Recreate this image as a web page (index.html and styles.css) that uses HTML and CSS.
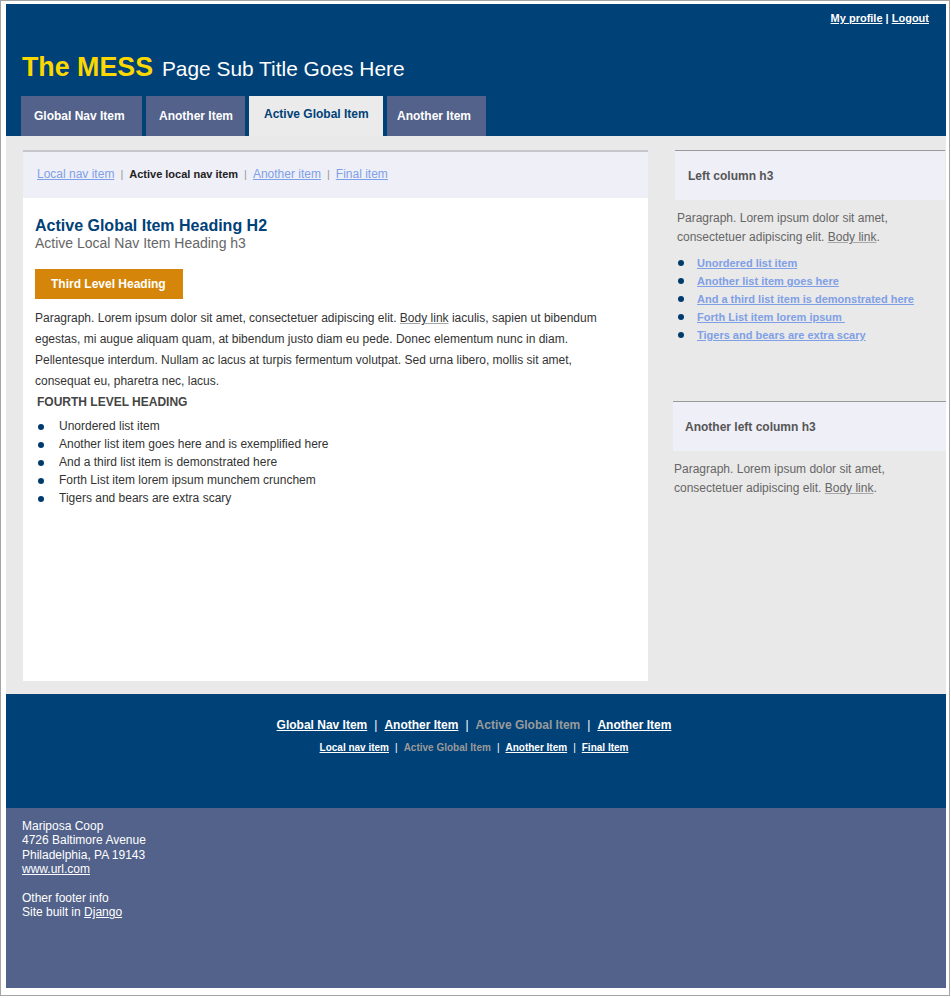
FILE: index.html
```html
<!DOCTYPE html>
<html lang="en">
<head>
<meta charset="utf-8">
<title>The MESS</title>
<link rel="stylesheet" href="styles.css">
</head>
<body>
<div class="frame">
  <div class="page">
    <header class="masthead">
      <div class="toplinks"><a href="#">My profile</a> | <a href="#">Logout</a></div>
      <h1 class="title"><span class="brand">The MESS</span> <span class="subtitle">Page Sub Title Goes Here</span></h1>
      <nav class="gnav">
        <a class="tab tab-1" href="#">Global Nav Item</a>
        <a class="tab tab-2" href="#">Another Item</a>
        <a class="tab tab-active" href="#">Active Global Item</a>
        <a class="tab tab-4" href="#">Another Item</a>
      </nav>
    </header>

    <div class="content">
      <main class="main">
        <div class="lnav">
          <a href="#">Local nav item</a><span class="sep">|</span><span class="lnav-active">Active local nav item</span><span class="sep">|</span><a href="#">Another item</a><span class="sep">|</span><a href="#">Final item</a>
        </div>
        <div class="article">
          <h2 class="h2">Active Global Item Heading H2</h2>
          <h3 class="h3">Active Local Nav Item Heading h3</h3>
          <div class="third">Third Level Heading</div>
          <p class="para">Paragraph. Lorem ipsum dolor sit amet, consectetuer adipiscing elit. <a class="body-link" href="#">Body link</a> iaculis, sapien ut bibendum egestas, mi augue aliquam quam, at bibendum justo diam eu pede. Donec elementum nunc in diam. Pellentesque interdum. Nullam ac lacus at turpis fermentum volutpat. Sed urna libero, mollis sit amet, consequat eu, pharetra nec, lacus.</p>
          <h4 class="h4">FOURTH LEVEL HEADING</h4>
          <ul class="list">
            <li>Unordered list item</li>
            <li>Another list item goes here and is exemplified here</li>
            <li>And a third list item is demonstrated here</li>
            <li>Forth List item lorem ipsum munchem crunchem</li>
            <li>Tigers and bears are extra scary</li>
          </ul>
        </div>
      </main>

      <aside class="side">
        <section class="box box-first">
          <h3 class="box-title">Left column h3</h3>
          <p class="box-para">Paragraph. Lorem ipsum dolor sit amet, consectetuer adipiscing elit. <a class="body-link" href="#">Body link</a>.</p>
          <ul class="side-list">
            <li><a href="#">Unordered list item</a></li>
            <li><a href="#">Another list item goes here</a></li>
            <li><a href="#">And a third list item is demonstrated here</a></li>
            <li><a href="#">Forth List item lorem ipsum&nbsp;</a></li>
            <li><a href="#">Tigers and bears are extra scary</a></li>
          </ul>
        </section>
        <section class="box box-second">
          <h3 class="box-title">Another left column h3</h3>
          <p class="box-para">Paragraph. Lorem ipsum dolor sit amet, consectetuer adipiscing elit. <a class="body-link" href="#">Body link</a>.</p>
        </section>
      </aside>
    </div>

    <footer class="foot">
      <div class="fnav">
        <a href="#">Global Nav Item</a><span class="fsep">|</span><a href="#">Another Item</a><span class="fsep">|</span><span class="f-active">Active Global Item</span><span class="fsep">|</span><a href="#">Another Item</a>
      </div>
      <div class="fnav-sub">
        <a href="#">Local nav item</a><span class="fsep-sub">|</span><span class="f-active">Active Global Item</span><span class="fsep-sub">|</span><a href="#">Another Item</a><span class="fsep-sub">|</span><a href="#">Final Item</a>
      </div>
    </footer>

    <div class="colophon">
      Mariposa Coop<br>
      4726 Baltimore Avenue<br>
      Philadelphia, PA 19143<br>
      <a href="#">www.url.com</a><br>
      <br>
      Other footer info<br>
      Site built in <a href="#">Django</a>
    </div>
  </div>
</div>
</body>
</html>
```

FILE: styles.css
```css
* { box-sizing: content-box; }

body {
  margin: 0;
  background: #ffffff;
  font-family: "Liberation Sans", Arial, Helvetica, sans-serif;
  color: #333333;
}

.frame {
  width: 940px;
  height: 984px;
  border: 1px solid #a4a4a4;
  padding: 3px 3px 7px 5px;
}

.page {
  width: 940px;
  height: 984px;
  display: flex;
  flex-direction: column;
}

/* ---------- masthead ---------- */
.masthead {
  background: #004177;
  height: 132px;
  display: flex;
  flex-direction: column;
}

.toplinks {
  padding-top: 7px;
  padding-right: 17px;
  text-align: right;
  font-size: 11px;
  font-weight: bold;
  line-height: 14px;
  color: #ffffff;
}
.toplinks a { color: #ffffff; }

.title {
  margin: 24px 0 0 16px;
  line-height: 32px;
  height: 32px;
  font-weight: normal;
  white-space: nowrap;
}
.brand {
  color: #fcd800;
  font-size: 26.8px;
  font-weight: bold;
}
.subtitle {
  color: #ffffff;
  font-size: 20.9px;
}

.gnav {
  margin: 15px 0 0 15px;
  display: flex;
  gap: 4px;
  height: 40px;
}
.tab {
  display: block;
  height: 40px;
  line-height: 40px;
  background: #52628a;
  color: #ffffff;
  font-size: 12px;
  font-weight: bold;
  text-decoration: none;
  white-space: nowrap;
}
.tab-1 { width: 108px; padding-left: 13px; }
.tab-2 { width: 86px; padding-left: 13px; }
.tab-4 { width: 89px; padding-left: 10px; line-height: 41px; }
.tab-active {
  width: 119px;
  padding-left: 15px;
  background: #ebebeb;
  color: #004177;
  line-height: 36px;
}

/* ---------- content ---------- */
.content {
  background: #e9e9e9;
  height: 531px;
  padding: 14px 0 13px 17px;
  display: flex;
}

.main {
  width: 625px;
  height: 531px;
  background: #ffffff;
}

.lnav {
  border-top: 2px solid #c6c6cc;
  background: #efeff8;
  height: 46px;
  line-height: 44px;
  padding-left: 14px;
  font-size: 12px;
  color: #888888;
}
.lnav a { color: #7f9fe6; }
.lnav-active { color: #222222; font-weight: bold; font-size: 11px; }
.sep { margin: 0 6px; color: #999999; font-size: 11px; }

.article { padding: 19px 40px 0 12px; }

.h2 {
  margin: 0;
  font-size: 16px;
  line-height: 18px;
  font-weight: bold;
  color: #004177;
}
.h3 {
  margin: 0;
  font-size: 14px;
  line-height: 16px;
  font-weight: normal;
  color: #666666;
}
.third {
  margin-top: 18px;
  width: 132px;
  height: 30px;
  line-height: 30px;
  padding-left: 16px;
  background: #d5860a;
  color: #ffffff;
  font-size: 12px;
  font-weight: bold;
}
.para {
  margin: 9px 0 0 0;
  font-size: 12px;
  line-height: 21px;
  color: #333333;
}
.body-link {
  color: inherit;
  text-decoration: underline;
  text-decoration-color: #a8a8a8;
}
.h4 {
  margin: 3px 0 0 2px;
  font-size: 12px;
  line-height: 14px;
  font-weight: bold;
  color: #444444;
}
.list {
  list-style: none;
  margin: 8px 0 0 0;
  padding: 0 0 0 24px;
  font-size: 12px;
  line-height: 18px;
  color: #333333;
}
.list li { position: relative; }
.list li::before,
.side-list li::before {
  content: "";
  position: absolute;
  left: -21px;
  top: 7px;
  width: 6px;
  height: 6px;
  border-radius: 50%;
  background: #003b6e;
}

/* ---------- sidebar ---------- */
.side {
  width: 271px;
  margin-left: 27px;
}
.box-title {
  margin: 0;
  border-top: 1px solid #9a9a9a;
  background: #efeff8;
  height: 47px;
  padding-top: 2px;
  line-height: 47px;
  font-size: 12px;
  font-weight: bold;
  color: #555555;
}
.box-first { margin-right: 1px; }
.box-first .box-title { padding-left: 13px; }
.box-second { margin: 57px 0 0 -2px; }
.box-second .box-title { padding-left: 12px; }

.box-para {
  margin: 9px 0 0 0;
  font-size: 12px;
  line-height: 19px;
  color: #666666;
}
.box-first .box-para { padding-left: 2px; }
.box-second .box-para { padding-left: 1px; margin-top: 9px; }

.side-list {
  list-style: none;
  margin: 7px 0 0 0;
  padding: 0 0 0 22px;
  font-size: 11px;
  line-height: 18px;
  font-weight: bold;
}
.side-list li { position: relative; }
.side-list li::before { left: -19px; top: 6px; }
.side-list a { color: #7f9fe6; }

/* ---------- footer ---------- */
.foot {
  background: #004177;
  height: 114px;
  padding-right: 4px;
  text-align: center;
  color: #ffffff;
}
.fnav {
  padding-top: 23px;
  font-size: 12px;
  line-height: 16px;
  font-weight: bold;
}
.fnav a, .fnav-sub a { color: #ffffff; }
.f-active { color: #9a9a9a; }
.fsep { margin: 0 7px; font-weight: normal; }
.fnav-sub {
  margin-top: 8px;
  font-size: 10px;
  line-height: 14px;
  font-weight: bold;
}
.fsep-sub { margin: 0 6px; font-weight: normal; }

.colophon {
  background: #52628a;
  height: 169px;
  padding: 11px 0 0 16px;
  font-size: 12px;
  line-height: 14.4px;
  color: #ffffff;
}
.colophon a { color: #ffffff; }
```
